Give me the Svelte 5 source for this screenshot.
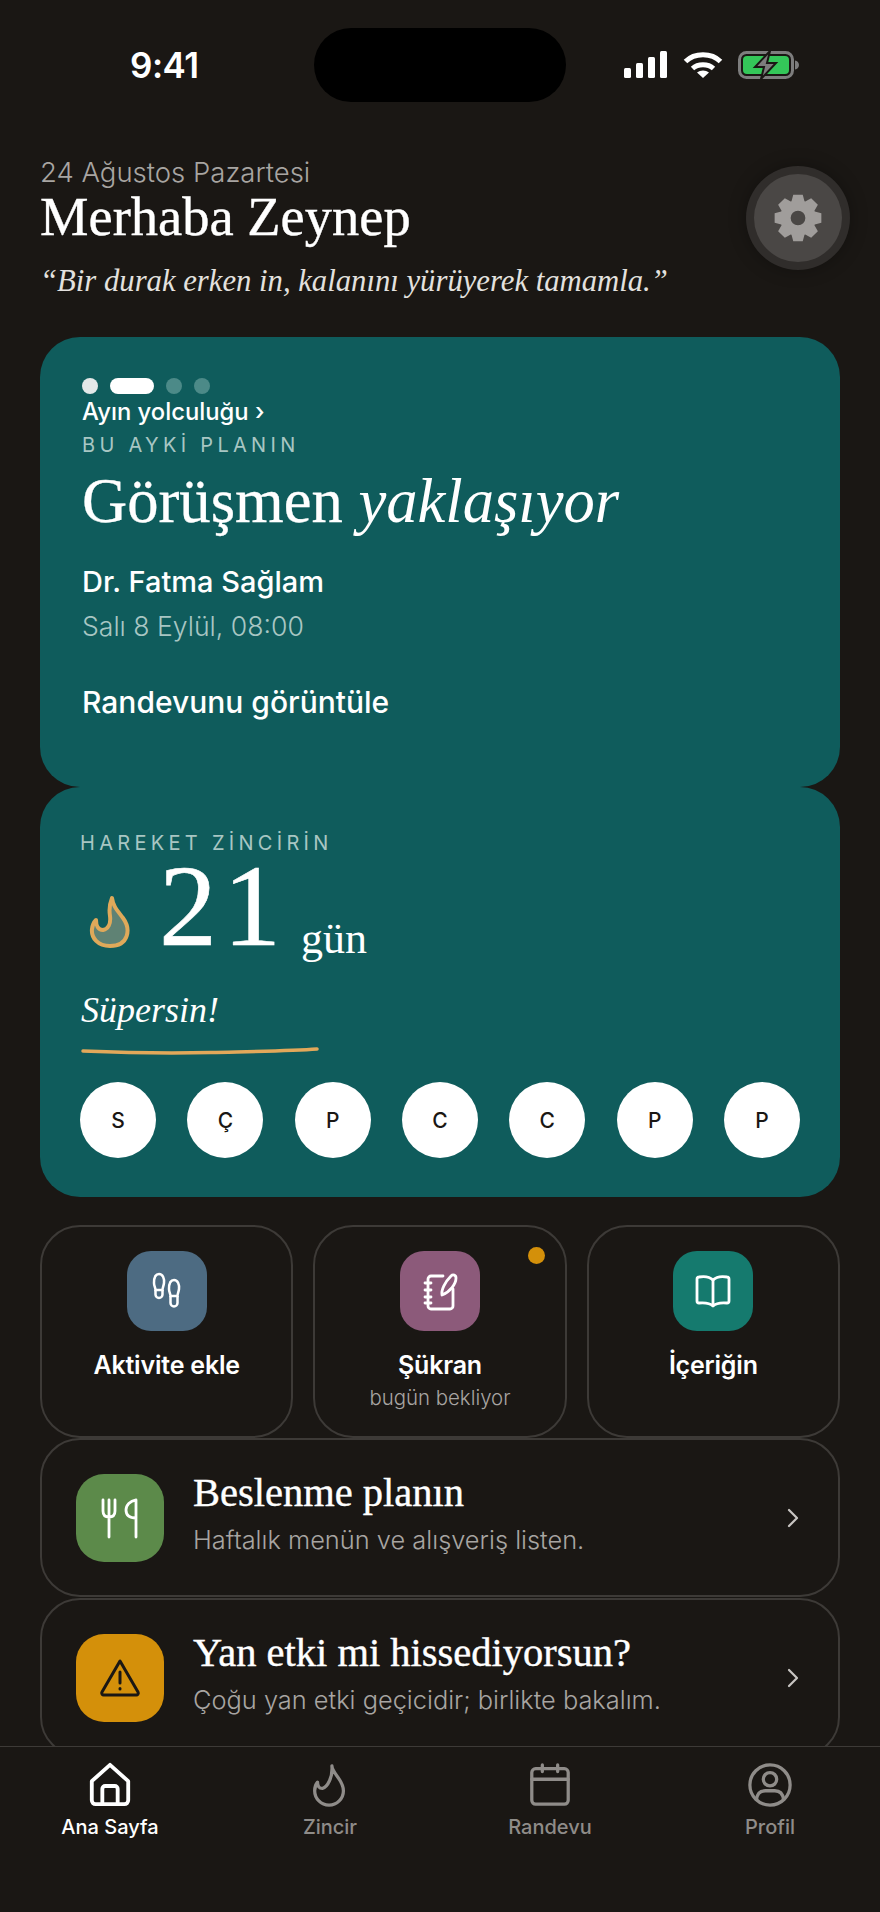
<script lang="ts">
  const days = ['S', 'Ç', 'P', 'C', 'C', 'P', 'P'];

  const gearPath = (() => {
    const pts: string[] = [];
    for (let i = 0; i < 8; i++) {
      const a = (i * Math.PI) / 4 - Math.PI / 2;
      const s = 0.2;
      const list = [
        [8.3, a - 0.37],
        [11, a - s],
        [11, a + s],
        [8.3, a + 0.37]
      ];
      for (const [r, t] of list) {
        pts.push(`${(12 + r * Math.cos(t)).toFixed(2)} ${(12 + r * Math.sin(t)).toFixed(2)}`);
      }
    }
    return `M${pts.join('L')}Z M12 8.6a3.4 3.4 0 1 0 0 6.8a3.4 3.4 0 1 0 0-6.8Z`;
  })();
</script>

<div class="phone">
  <header class="status">
    <span class="time">9:41</span>
    <span class="island"></span>
    <span class="status-icons">
      <svg width="44" height="28" viewBox="0 0 44 28" fill="#fff">
        <rect x="0" y="17" width="7" height="10" rx="1.5" />
        <rect x="12" y="12" width="7" height="15" rx="1.5" />
        <rect x="24" y="6" width="7" height="21" rx="1.5" />
        <rect x="36" y="0" width="7" height="27" rx="1.5" />
      </svg>
      <svg width="40" height="28" viewBox="0 0 40 28" fill="none" stroke="#fff" stroke-width="5">
        <path d="M2.5 10.5C11.5 1.5 28.5 1.5 37.5 10.5" />
        <path d="M9.5 17.5C15 12.5 25 12.5 30.5 17.5" />
        <path d="M20 27l-6-5.5c3.500-2.800 8.500-2.800 12 0z" fill="#fff" stroke="none" />
      </svg>
      <svg width="62" height="28" viewBox="0 0 62 28">
        <rect x="1.500" y="1.500" width="53" height="25" rx="7" fill="none" stroke="#7d7d7d" stroke-width="3" />
        <rect x="5" y="5" width="46" height="18" rx="4" fill="#34c759" />
        <path d="M57 9.500c2.500.5 4 2.300 4 4.500s-1.500 4-4 4.500z" fill="#7d7d7d" />
        <path d="M32 0 17 16h9l-3 12 15-16h-9z" fill="#7d7d7d" stroke="#1a1714" stroke-width="2" />
      </svg>
    </span>
  </header>

  <main class="scroll">
    <section class="greeting">
      <div class="greeting-text">
        <p class="date">24 Ağustos Pazartesi</p>
        <h1>Merhaba Zeynep</h1>
        <p class="quote">“Bir durak erken in, kalanını yürüyerek tamamla.”</p>
      </div>
      <button class="gear" aria-label="Ayarlar">
        <svg width="52" height="52" viewBox="0 0 24 24" fill="#a09d9b">
          <path fill-rule="evenodd" d={gearPath} />
        </svg>
      </button>
    </section>

    <section class="card plan">
      <div class="dots">
        <span class="dot done"></span>
        <span class="dot active"></span>
        <span class="dot"></span>
        <span class="dot"></span>
      </div>
      <div class="journey">Ayın yolculuğu ›</div>
      <div class="eyebrow">BU AYKİ PLANIN</div>
      <h2>Görüşmen <em>yaklaşıyor</em></h2>
      <div class="doctor">Dr. Fatma Sağlam</div>
      <div class="when">Salı 8 Eylül, 08:00</div>
      <div class="cta">Randevunu görüntüle</div>
    </section>

    <section class="card streak">
      <div class="eyebrow">HAREKET ZİNCİRİN</div>
      <div class="count">
        <svg class="flame" width="42" height="54" viewBox="0 0 42 54">
          <path
            d="M23 3c1 8 5 12 11 20 8 11 6 28-13 28C9 51 2 43 3 34c.5-4 2-7 4-9 0 5 2 10 7 10 5-1 8-6 7-14-1-6 0-13 2-18z"
            fill="#5f8274"
            stroke="#dfa95a"
            stroke-width="4"
            stroke-linejoin="round"
          />
        </svg>
        <span class="number">21</span>
        <span class="unit">gün</span>
      </div>
      <div class="cheer">Süpersin!</div>
      <svg class="underline" width="238" height="8" viewBox="0 0 238 8" fill="none">
        <path d="M2 4C50 6 90 6.500 130 5.500S210 4 236 2" stroke="#e2a85a" stroke-width="3.500" stroke-linecap="round" />
      </svg>
      <div class="days">
        {#each days as day}
          <span class="day">{day}</span>
        {/each}
      </div>
    </section>

    <section class="actions">
      <div class="action">
        <span class="icon blue">
          <svg width="40" height="40" viewBox="0 0 40 40" fill="none" stroke="#fff" stroke-width="2.500">
            <path d="M12 3c4 0 5.500 5 5 9-.4 3-1.500 5-1.500 7h-7c0-2-1.500-4-1.500-7 0-4 1-9 5-9z" />
            <path d="M8.500 19v4.500a3.500 3.500 0 0 0 7 0V19" />
            <path d="M27 9c4 0 5.500 5 5 9-.4 3-1.500 5-1.500 7h-7c0-2-1.500-4-1.500-7 0-4 1-9 5-9z" />
            <path d="M23.500 25v7a3.500 3.500 0 0 0 7 0v-7" />
          </svg>
        </span>
        <span class="action-label">Aktivite ekle</span>
      </div>
      <div class="action">
        <span class="badge"></span>
        <span class="icon plum">
          <svg width="44" height="44" viewBox="0 0 44 44" fill="none" stroke="#fff" stroke-width="2.800" stroke-linecap="round" stroke-linejoin="round">
            <path d="M25 7H13a3 3 0 0 0-3 3v27a3 3 0 0 0 3 3h19a3 3 0 0 0 3-3V20" />
            <path d="M7 14h6M7 21h6M7 28h6M7 34h6" />
            <path d="M24 26c-1-5 3-13 9-19 2-2 5-1 5 2 0 6-6 14-14 17z" />
          </svg>
        </span>
        <span class="action-label">Şükran</span>
        <span class="action-sub">bugün bekliyor</span>
      </div>
      <div class="action">
        <span class="icon teal">
          <svg width="42" height="42" viewBox="0 0 42 42" fill="none" stroke="#fff" stroke-width="2.800" stroke-linejoin="round">
            <path d="M21 10c-3-3-8-4-14-3a2 2 0 0 0-2 2v22a2 2 0 0 0 2 2c6-.5 11 0 14 3 3-3 8-3.500 14-3a2 2 0 0 0 2-2V9a2 2 0 0 0-2-2c-6-1-11 0-14 3z" />
            <path d="M21 10v24" />
          </svg>
        </span>
        <span class="action-label">İçeriğin</span>
      </div>
    </section>

    <section class="row">
      <span class="row-icon green">
        <svg width="44" height="44" viewBox="0 0 44 44" fill="none" stroke="#fff" stroke-width="2.800" stroke-linecap="round" stroke-linejoin="round">
          <path d="M5 4v11c0 4 2.500 6 6 6s6-2 6-6V4M11 4v37" />
          <path d="M38 41V4c-6 1-10 5-10 10 0 6 4 8 10 8" />
        </svg>
      </span>
      <div class="row-text">
        <div class="row-title">Beslenme planın</div>
        <div class="row-sub">Haftalık menün ve alışveriş listen.</div>
      </div>
      <svg class="chev" width="14" height="22" viewBox="0 0 14 22" fill="none" stroke="#c9c6c3" stroke-width="2.200" stroke-linecap="round" stroke-linejoin="round">
        <path d="M3 3l8 8-8 8" />
      </svg>
    </section>

    <section class="row">
      <span class="row-icon amber">
        <svg width="44" height="44" viewBox="0 0 44 44" fill="none" stroke="#1a1714" stroke-width="3" stroke-linecap="round" stroke-linejoin="round">
          <path d="M22 5 4 36a2 2 0 0 0 2 3h32a2 2 0 0 0 2-3z" />
          <path d="M22 16v11" />
          <path d="M22 32.500v.5" />
        </svg>
      </span>
      <div class="row-text">
        <div class="row-title">Yan etki mi hissediyorsun?</div>
        <div class="row-sub">Çoğu yan etki geçicidir; birlikte bakalım.</div>
      </div>
      <svg class="chev" width="14" height="22" viewBox="0 0 14 22" fill="none" stroke="#c9c6c3" stroke-width="2.200" stroke-linecap="round" stroke-linejoin="round">
        <path d="M3 3l8 8-8 8" />
      </svg>
    </section>
  </main>

  <nav class="tabs">
    <div class="tab on">
      <svg width="46" height="46" viewBox="0 0 24 24" fill="none" stroke="currentColor" stroke-width="2" stroke-linejoin="round">
        <path d="M2.500 10 12 1.500 21.500 10v10a2 2 0 0 1-2 2h-15a2 2 0 0 1-2-2z" />
        <path d="M8 22v-8a1.500 1.500 0 0 1 1.500-1.500h5A1.500 1.500 0 0 1 16 14v8" />
      </svg>
      <span>Ana Sayfa</span>
    </div>
    <div class="tab">
      <svg width="46" height="46" viewBox="0 0 24 24" fill="none" stroke="currentColor" stroke-width="1.700" stroke-linejoin="round">
        <path d="M13 2c0 4 6 7 6 13a7.500 7.500 0 0 1-15 0c0-2 .6-3.500 1.500-4.500 0 2 .8 3.300 2.500 3.300 2.800-.8 5.500-6 5-11.800z" />
      </svg>
      <span>Zincir</span>
    </div>
    <div class="tab">
      <svg width="46" height="46" viewBox="0 0 24 24" fill="none" stroke="currentColor" stroke-width="1.700" stroke-linecap="round" stroke-linejoin="round">
        <rect x="2.500" y="3.500" width="19" height="18.500" rx="2" />
        <path d="M2.500 9h19M8 1.500V5M16 1.500V5" />
      </svg>
      <span>Randevu</span>
    </div>
    <div class="tab">
      <svg width="46" height="46" viewBox="0 0 24 24" fill="none" stroke="currentColor" stroke-width="1.700" stroke-linecap="round">
        <circle cx="12" cy="12" r="10.500" />
        <circle cx="12" cy="9" r="3.500" />
        <path d="M5 19.500c.3-3 2-4.500 4.500-4.500h5c2.500 0 4.200 1.500 4.500 4.500" />
      </svg>
      <span>Profil</span>
    </div>
  </nav>
</div>

<style>
  :global(body) {
    margin: 0;
    background: #1a1714;
  }

  .phone {
    display: flex;
    flex-direction: column;
    width: 880px;
    height: 1912px;
    overflow: hidden;
    background: #1a1714;
    color: #fff;
    font-family: 'Inter', 'Liberation Sans', sans-serif;
  }

  .status {
    position: relative;
    flex: none;
    display: flex;
    align-items: center;
    justify-content: space-between;
    height: 130px;
    padding: 0 80px 0 130px;
    box-sizing: border-box;
  }

  .time {
    font-size: 35px;
    font-weight: 600;
    letter-spacing: -0.5px;
  }

  .island {
    position: absolute;
    left: 314px;
    top: 28px;
    width: 252px;
    height: 74px;
    border-radius: 37px;
    background: #000;
  }

  .status-icons {
    display: flex;
    align-items: center;
    gap: 15px;
  }

  .scroll {
    flex: 1;
    min-height: 0;
    overflow: hidden;
    padding: 0 40px;
  }

  .greeting {
    display: flex;
    justify-content: space-between;
    height: 207px;
  }

  .date {
    margin: 26px 0 0;
    font-size: 27.500px;
    line-height: 32px;
    font-weight: 300;
    color: #a8a5a2;
  }

  h1 {
    margin: 0;
    font-family: 'Liberation Serif', serif;
    font-size: 54.500px;
    line-height: 58px;
    font-weight: 400;
    -webkit-text-stroke: 0.4px #fff;
  }

  .quote {
    margin: 16px 0 0;
    font-family: 'Liberation Serif', serif;
    font-style: italic;
    font-size: 30.700px;
    line-height: 38px;
    color: #e3e1df;
  }

  .gear {
    display: grid;
    place-items: center;
    width: 88px;
    height: 88px;
    margin: 44px -2px 0 0;
    padding: 0;
    border: none;
    border-radius: 50%;
    background: #4a4745;
    box-shadow: 0 0 0 8px #302d2b, 0 0 18px 8px rgba(0, 0, 0, 0.3);
  }

  .card {
    border-radius: 40px;
    background: #0f5c5c;
    box-sizing: border-box;
  }

  .plan {
    height: 450px;
    padding: 41px 42px 0;
  }

  .dots {
    display: flex;
    gap: 12px;
  }

  .dot {
    width: 16px;
    height: 16px;
    border-radius: 8px;
    background: #4c8a88;
  }

  .dot.done {
    background: #e4e8e8;
  }

  .dot.active {
    width: 44px;
    background: #fff;
  }

  .journey {
    margin-top: 3px;
    font-size: 23.800px;
    line-height: 30px;
    font-weight: 500;
  }

  .eyebrow {
    font-size: 20px;
    line-height: 28px;
    letter-spacing: 4.300px;
    color: #a8c6c3;
  }

  .plan .eyebrow {
    margin-top: 4px;
  }

  h2 {
    margin: 6px 0 0;
    font-family: 'Liberation Serif', serif;
    font-size: 62.600px;
    line-height: 72px;
    font-weight: 400;
    -webkit-text-stroke: 0.3px #fff;
  }

  h2 em {
    font-style: italic;
    -webkit-text-stroke: 0;
  }

  .doctor {
    margin-top: 27px;
    font-size: 29px;
    line-height: 36px;
    font-weight: 500;
  }

  .when {
    margin-top: 8px;
    font-size: 26.600px;
    line-height: 36px;
    font-weight: 300;
    color: #a8c6c3;
  }

  .cta {
    margin-top: 40px;
    font-size: 30px;
    line-height: 36px;
    font-weight: 500;
  }

  .streak {
    height: 410px;
    padding: 42px 40px 0;
  }

  .count {
    display: flex;
    align-items: flex-end;
    height: 94px;
    margin-top: 2px;
  }

  .flame {
    margin: 0 28px 4px 9px;
    flex: none;
  }

  .number {
    font-family: 'Liberation Serif', serif;
    font-size: 116px;
    line-height: 94px;
    letter-spacing: 6px;
    -webkit-text-stroke: 0.6px #fff;
  }

  .unit {
    margin: 0 0 -8px 14px;
    font-family: 'Liberation Serif', serif;
    font-size: 44px;
    line-height: 44px;
  }

  .cheer {
    margin: 35px 0 0 1px;
    font-family: 'Liberation Serif', serif;
    font-style: italic;
    font-size: 36px;
    line-height: 44px;
  }

  .underline {
    display: block;
    margin: 15px 0 0 1px;
  }

  .days {
    display: flex;
    justify-content: space-between;
    margin-top: 27px;
  }

  .day {
    display: grid;
    place-items: center;
    width: 76px;
    height: 76px;
    border-radius: 50%;
    background: #fff;
    color: #1a1714;
    font-size: 21px;
    font-weight: 500;
  }

  .actions {
    display: grid;
    grid-template-columns: repeat(3, 1fr);
    gap: 20px;
    margin-top: 28px;
  }

  .action {
    position: relative;
    display: flex;
    flex-direction: column;
    align-items: center;
    height: 213px;
    padding-top: 24px;
    box-sizing: border-box;
    border: 2px solid #3d3a37;
    border-radius: 40px;
  }

  .icon {
    display: grid;
    place-items: center;
    width: 80px;
    height: 80px;
    border-radius: 24px;
  }

  .blue { background: #4d6b82; }
  .plum { background: #8c5a7a; }
  .teal { background: #157a6e; }
  .green { background: #5c8a4a; }
  .amber { background: #d4900a; }

  .badge {
    position: absolute;
    top: 20px;
    right: 20px;
    width: 17px;
    height: 17px;
    border-radius: 50%;
    background: #d4900a;
  }

  .action-label {
    margin-top: 18px;
    font-size: 25px;
    line-height: 32px;
    font-weight: 600;
    letter-spacing: -0.2px;
  }

  .action-sub {
    margin-top: 4px;
    font-size: 20.400px;
    line-height: 26px;
    font-weight: 300;
    color: #a8a5a2;
  }

  .row {
    display: flex;
    align-items: center;
    height: 159px;
    padding: 0 38px 0 34px;
    box-sizing: border-box;
    border: 2px solid #3d3a37;
    border-radius: 40px;
  }

  .row + .row {
    margin-top: 1px;
  }

  .row-icon {
    flex: none;
    display: grid;
    place-items: center;
    width: 88px;
    height: 88px;
    border-radius: 28px;
  }

  .row-text {
    flex: 1;
    margin: 0 0 10px 29px;
  }

  .row-title {
    font-family: 'Liberation Serif', serif;
    font-size: 40.500px;
    line-height: 46px;
    font-weight: 400;
    -webkit-text-stroke: 0.4px #fff;
  }

  .row-sub {
    margin-top: 8px;
    font-size: 25.400px;
    line-height: 32px;
    font-weight: 300;
    color: #a8a5a2;
  }

  .tabs {
    flex: none;
    display: grid;
    grid-template-columns: repeat(4, 1fr);
    height: 166px;
    box-sizing: border-box;
    padding-top: 15px;
    border-top: 1px solid #3d3a37;
    background: #1a1714;
  }

  .tab {
    display: flex;
    flex-direction: column;
    align-items: center;
    color: #8f8c89;
    font-size: 20px;
    line-height: 28px;
    font-weight: 500;
  }

  .tab span {
    margin-top: 5px;
  }

  .tab.on {
    color: #fff;
  }
</style>
